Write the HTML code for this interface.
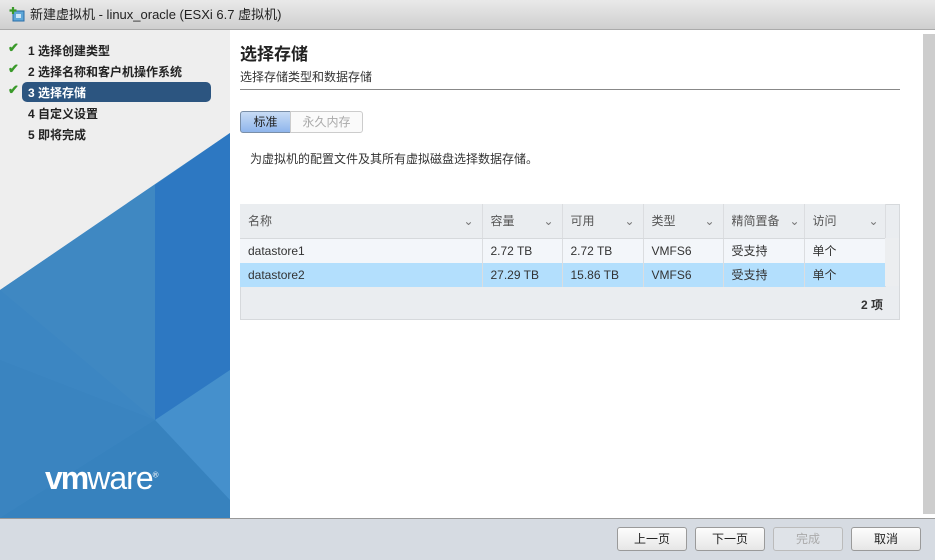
<!DOCTYPE html>
<html><head><meta charset="utf-8"><style>
*{margin:0;padding:0;box-sizing:border-box}
body{width:935px;height:560px;overflow:hidden;font-family:"Liberation Sans","Noto Sans CJK SC",sans-serif;font-size:12px;color:#333;background:#fff;position:relative}
.title{position:absolute;left:0;top:0;width:935px;height:30px;background:linear-gradient(#e9e9e9,#cfcfcf);border-bottom:1px solid #aaa;font-size:13px;line-height:29px;padding-left:30px;color:#222}
.left{position:absolute;left:0;top:30px;width:230px;height:488px;background:#eeeeee;overflow:hidden}
.step{position:absolute;left:28px;font-size:12px;font-weight:bold;color:#222}
.chk{position:absolute;left:8px;color:#3a9a2a;font-weight:bold;font-size:13px}
.sel{position:absolute;left:22px;top:82px;width:189px;height:20px;background:#2c5580;border-radius:5px}
.sb{position:absolute;left:920px;top:30px;width:15px;height:488px;background:#fff}
.sb div{position:absolute;left:3px;top:4px;width:12px;height:480px;background:#cdcdcd}
table{border-collapse:collapse;position:absolute;left:240px;top:204px;width:645px;table-layout:fixed}
td{border-right:1px solid #dbdde0;height:24px;padding:0 0 0 8px;font-size:12px;line-height:24px;white-space:nowrap;overflow:hidden}
.hd td{height:34px;background:#eaedf0;border-bottom:1px solid #d6d9dc;color:#555}
.bot{position:absolute;left:0;top:518px;width:935px;height:42px;background:#d6dbe2;border-top:1px solid #999}
.btn{position:absolute;top:8px;width:70px;height:24px;border:1px solid #9a9a9a;border-radius:3px;background:linear-gradient(#fdfdfd,#e6e6e6);text-align:center;line-height:22px;font-size:12px;color:#222}
.ar{float:right;margin-right:8px;color:#777}
</style></head><body>
<div class="title"><svg style="position:absolute;left:9px;top:7px" width="16" height="16"><rect x="4" y="4" width="11" height="10" fill="#5da7d8" stroke="#2a6ea8"/><rect x="7" y="7" width="5" height="4" fill="#cde6f7"/><path d="M4 0v7M0.5 3.5h7" stroke="#3a9a2a" stroke-width="2.2"/></svg>新建虚拟机 - linux_oracle (ESXi 6.7 虚拟机)</div>
<div class="left">
<svg width="230" height="488" style="position:absolute;left:0;top:0">
<polygon points="230,103 0,260 0,488 230,488" fill="#3c86c2"/>
<polygon points="155,155 230,103 230,488 155,488" fill="#2d78c2"/>
<polygon points="0,260 155,155 155,390" fill="#3f88c2"/>
<polygon points="0,330 155,390 0,488" fill="#3a84c0"/>
<polygon points="155,390 230,340 230,488" fill="#4590cc"/>
<polygon points="0,488 155,390 230,470 230,488" fill="#3782be"/>
</svg>
<div style="position:absolute;left:45px;top:430px;color:#fff;font-size:32px;letter-spacing:-1px;font-family:'Liberation Sans',sans-serif"><b style="letter-spacing:-2px">vm</b>ware<sup style="font-size:8px">®</sup></div>
</div>
<div class="sel" style="top:82px"></div>
<span class="chk" style="top:40px">✔</span><span class="step" style="top:42px">1 选择创建类型</span>
<span class="chk" style="top:61px">✔</span><span class="step" style="top:63px">2 选择名称和客户机操作系统</span>
<span class="chk" style="top:82px">✔</span><span class="step" style="top:84px;color:#fff">3 选择存储</span>
<span class="step" style="top:105px">4 自定义设置</span>
<span class="step" style="top:126px">5 即将完成</span>
<div style="position:absolute;left:240px;top:40px;font-size:17px;font-weight:bold;color:#222">选择存储</div>
<div style="position:absolute;left:240px;top:68px;font-size:12px;color:#333">选择存储类型和数据存储</div>
<div style="position:absolute;left:240px;top:89px;width:660px;height:1px;background:#888"></div>
<div style="position:absolute;left:240px;top:111px;width:51px;height:22px;border:1px solid #7a8fa8;border-radius:3px 0 0 3px;background:linear-gradient(#c8dcf5,#8fb5ec);text-align:center;line-height:20px;color:#222">标准</div>
<div style="position:absolute;left:290px;top:111px;width:73px;height:22px;border:1px solid #ccc;border-radius:0 3px 3px 0;background:#fafafa;text-align:center;line-height:20px;color:#aaa">永久内存</div>
<div style="position:absolute;left:250px;top:150px;color:#333">为虚拟机的配置文件及其所有虚拟磁盘选择数据存储。</div>
<div style="position:absolute;left:240px;top:204px;width:660px;height:116px;border:1px solid #d6d9dc;background:#eaedf0"></div>
<table>
<colgroup><col style="width:242px"><col style="width:80px"><col style="width:81px"><col style="width:80px"><col style="width:81px"><col style="width:81px"></colgroup>
<tr class="hd"><td>名称<span class="ar">⌄</span></td><td>容量<span class="ar">⌄</span></td><td>可用<span class="ar">⌄</span></td><td>类型<span class="ar">⌄</span></td><td>精简置备<span class="ar" style="margin-right:4px">⌄</span></td><td>访问<span class="ar" style="margin-right:6px">⌄</span></td></tr>
<tr style="background:#f3f6fa"><td>datastore1</td><td>2.72 TB</td><td>2.72 TB</td><td>VMFS6</td><td>受支持</td><td>单个</td></tr>
<tr style="background:#b3dffd"><td>datastore2</td><td>27.29 TB</td><td>15.86 TB</td><td>VMFS6</td><td>受支持</td><td>单个</td></tr>
</table>
<div style="position:absolute;left:885px;top:238px;width:14px;height:48px;background:#eceef0"></div>
<div style="position:absolute;left:861px;top:296px;font-weight:bold;color:#333">2 项</div>
<div class="sb"><div></div></div>
<div class="bot">
<div class="btn" style="left:617px">上一页</div>
<div class="btn" style="left:695px">下一页</div>
<div class="btn" style="left:773px;color:#aaa;background:#dfe3e8;border-color:#bbb">完成</div>
<div class="btn" style="left:851px">取消</div>
</div>
</body></html>
